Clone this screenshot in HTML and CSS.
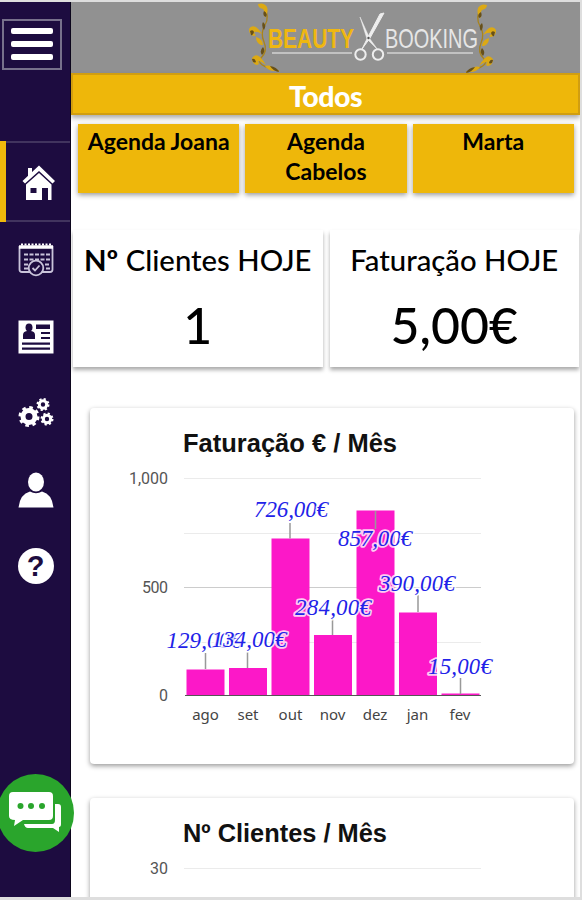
FILE: index.html
```html
<!DOCTYPE html>
<html lang="pt">
<head>
<meta charset="utf-8">
<title>Beauty Booking</title>
<link rel="stylesheet" href="styles.css">
</head>
<body>
<div class="app">
  <aside class="sidebar">
    <button class="menu" aria-label="Menu"><span></span><span></span><span></span></button>
    <nav class="nav">
      <a class="item active">
        <svg width="34" height="36" viewBox="0 0 34 36" fill="#fff">
          <path d="M6 3h4v6l-4 4z"/>
          <path d="M17 .5 33 16l-2.500 2.500L17 6 3 18.500.500 16z"/>
          <path d="M17 8 29.500 19.500V35H26V23h-6v12H4V19.500zM8.500 23v5h6v-5z" fill-rule="evenodd"/>
        </svg>
      </a>
      <a class="item">
        <svg width="36" height="34" viewBox="0 0 36 34" fill="none" stroke="#c9c4da">
          <path d="M12 29H4q-2.500 0-2.500-2.500V4h33v22.500Q34.500 29 32 29h-8" stroke-width="1.800"/>
          <path d="M1 4h34" stroke="#fff" stroke-width="3.500"/>
          <path d="M3 1.500h31" stroke="#fff" stroke-width="2" stroke-dasharray="2 1.500"/>
          <path d="M6 11.500h26M6 16.500h26M6 21.500h5M27 21.500h5M6 25.500h4M28 25.500h4" stroke-width="1.800" stroke-dasharray="4 1.500"/>
          <circle cx="18" cy="25" r="7.300" fill="#1d0c40" stroke-width="1.800"/>
          <path d="m14.500 25 2.500 2.500 4.500-5" stroke-width="1.800"/>
        </svg>
      </a>
      <a class="item">
        <svg width="36" height="34" viewBox="0 0 36 34">
          <path d="M.5.500h35v33H.5z" fill="#fff"/>
          <g fill="#1d0c40"><ellipse cx="11" cy="7.500" rx="3.500" ry="4"/><path d="M5 19v-4q0-3.500 4-4h4q4 .500 4 4v4zM18 4.500h14V9H18zM23 12h9v2h-9zM23 17h9v2h-9zM4 22.500h28v2.200H4zM4 27.500h28v2.200H4z"/></g>
        </svg>
      </a>
      <a class="item">
        <svg width="36" height="30" viewBox="0 0 36 30" fill="none" stroke="#fff">
          <circle cx="11" cy="18.500" r="6" stroke-width="5"/><circle cx="11" cy="18.500" r="9" stroke-width="3" stroke-dasharray="3.530 3.530"/>
          <circle cx="25" cy="6.500" r="3.700" stroke-width="3"/><circle cx="25" cy="6.500" r="5.500" stroke-width="2" stroke-dasharray="2.160 2.160"/>
          <circle cx="29" cy="21" r="3.700" stroke-width="3"/><circle cx="29" cy="21" r="5.500" stroke-width="2" stroke-dasharray="2.160 2.160"/>
        </svg>
      </a>
      <a class="item">
        <svg width="36" height="36" viewBox="0 0 36 36" fill="#fff">
          <ellipse cx="18" cy="10" rx="8" ry="9.500"/><path d="M.5 35.500Q2 22 12 19.500q6 3.500 12 0Q34 22 35.500 35.500z"/>
        </svg>
      </a>
      <a class="item"><span class="help">?</span></a>
    </nav>
  </aside>

  <main class="content">
    <header class="brand">
      <svg width="340" height="71" viewBox="240 2 340 71" role="img" aria-label="Beauty Booking">
        <defs>
          <g id="flourish">
            <path d="M264 8q6 8 1 17-5 8-1 17t-3 16 18 13" fill="none" stroke="#a9831b" stroke-width="1.300"/>
            <g fill="#dca914">
              <path d="M258 4q6-2 9 3 2 6-3 10 1-6-1-8-5-1-5-5zM249 29q2-4 7-2 4 3 6 7-7-4-8-1 3 3 0 3-5-1-5-7zM252 58q4-5 8-1 4 4 6 8-5-4-8-4 2 4-1 4-5-1-5-7zM261 45q-5-2-5-8 7 2 7 8zM265 66q6-2 10 5-7 0-10-5z"/>
            </g>
            <g fill="#67501a">
              <path d="M264 11q4 2 2 6-4-1-2-6zM250 31q3-2 4 1-1 4-3 3zM263 22q4 3 1 8-3-4-1-8zM252 59q3-1 4 3-3 2-4-3zM263 47q3 4-1 8-3-4 1-8zM270 66q7 1 9 6-6-1-9-6z"/>
            </g>
          </g>
        </defs>
        <use href="#flourish"/>
        <use href="#flourish" transform="matrix(-1 0 0 1 745 1)"/>
        <text class="beauty" x="268" y="48" textLength="86" lengthAdjust="spacingAndGlyphs">BEAUTY</text>
        <text class="booking" x="385" y="48" textLength="93" lengthAdjust="spacingAndGlyphs">BOOKING</text>
        <path d="M272 53h80M387 53h86" stroke="#d2d2d2" stroke-width="1.500"/>
        <g fill="none" stroke="#eee">
          <path d="m360 17 10 22 8 11-11-11z" fill="#eee" stroke-width=".5"/>
          <path d="m384 13-14 25-8 11 7-14 11-21z" fill="#eee" stroke-width="1"/>
          <circle cx="360.500" cy="54.500" r="5.200" stroke-width="2"/><circle cx="378" cy="54.500" r="5.200" stroke-width="2"/>
        </g>
        <circle cx="368.500" cy="38" r="1.200" fill="#555"/>
      </svg>
    </header>
    <div class="all">Todos</div>
    <div class="agendas">
      <button>Agenda Joana</button>
      <button>Agenda Cabelos</button>
      <button>Marta</button>
    </div>
    <section class="stats">
      <article><h2><b>Nº</b> Clientes HOJE</h2><p>1</p></article>
      <article><h2>Faturação HOJE</h2><p>5,00€</p></article>
    </section>
    <section class="charts">
      <article class="chart">
        <svg width="484" height="356" viewBox="90 408 484 356">
          <text class="title" x="183" y="452" textLength="214" lengthAdjust="spacingAndGlyphs">Faturação € / Mês</text>
          <path class="minor" d="M184 478.500h297M184 533.500h297M184 642.500h297"/>
          <path class="major" d="M184 587.500h297"/>
          <g class="ticks"><text x="168" y="484" textLength="39">1,000</text><text x="168" y="593" textLength="26">500</text><text x="168" y="701">0</text></g>
          <path class="bars" d="M186.500 669.500h38V695h-38zM229 668h38v27h-38zM271.500 538.500h38V695h-38zM314 635h38v60h-38zM356.500 510.500h38V695h-38zM399 612.500h38V695h-38zM441.500 693.500h38v1.500h-38z"/>
          <path class="axis" d="M185 695.500h296"/>
          <path class="stems" d="M205.500 653v16M247.500 652v16M290 523v15.500M332.500 619v16M375.500 511v18M418 595v17M460.500 678v16"/>
          <g class="values">
            <text x="204" y="648" textLength="75">129,00€</text>
            <text x="249" y="647" textLength="75">134,00€</text>
            <text x="291" y="517" textLength="74">726,00€</text>
            <text x="333" y="615" textLength="76">284,00€</text>
            <text x="375" y="546" textLength="74">857,00€</text>
            <text x="417" y="591" textLength="76">390,00€</text>
            <text x="460" y="674" textLength="64">15,00€</text>
          </g>
          <g class="months">
            <text x="205.500" y="720">ago</text><text x="248" y="720">set</text><text x="290.500" y="720">out</text><text x="332.500" y="720">nov</text><text x="375" y="720">dez</text><text x="417.500" y="720">jan</text><text x="460" y="720">fev</text>
          </g>
        </svg>
      </article>
      <article class="chart">
        <svg width="484" height="356" viewBox="90 798 484 356">
          <text class="title" x="183" y="842" textLength="204" lengthAdjust="spacingAndGlyphs">Nº Clientes / Mês</text>
          <path class="minor" d="M184 868.500h297"/>
          <g class="ticks"><text x="168" y="874" textLength="18">30</text></g>
        </svg>
      </article>
    </section>
  </main>
  <button class="chat" aria-label="Chat">
    <svg width="54" height="44" viewBox="0 0 54 44">
      <path d="M46 13h3q3 0 3 3v17q0 3-2 3v5l-6-4H19q-3 0-4-4h28q3 0 3-4z" fill="#fff"/>
      <path d="M4 1h36q4 0 4 4v20q0 4-4 4H14l-9 6 1-6q-6 0-6-4V5q0-4 4-4z" fill="#fff"/>
      <g fill="#2aa52c"><circle cx="11.500" cy="15" r="3"/><circle cx="22" cy="15" r="3"/><circle cx="33" cy="15" r="3"/></g>
    </svg>
  </button>
</div>
</body>
</html>
```

FILE: styles.css
```css
* { box-sizing: border-box; }
body { margin: 0; background: #fff; font-family: Lato, sans-serif; color: #000; }
button { border: 0; padding: 0; font: inherit; color: inherit; }
.app {
  position: relative; display: flex; width: 582px; height: 900px; overflow: hidden;
  border: solid #dedede; border-width: 2px 2px 3px 0; background: #fff;
}
.sidebar { flex: 0 0 71px; background: #1d0c40; border-right: 1px solid #0c061c; }
.menu {
  display: flex; flex-direction: column; justify-content: space-between;
  width: 60px; height: 51px; margin: 17px 0 0 2px; padding: 7px 7px 8px;
  background: none; border: 2px solid #77708c;
}
.menu span { height: 6px; background: #fff; border-radius: 2px; }
.nav { display: flex; flex-direction: column; margin-top: 71px; }
.item { display: flex; align-items: center; justify-content: center; height: 76.5px; padding-left: 1px; }
.active {
  height: 81px; padding-top: 3px;
  border-left: 6px solid #f0b90b;
  box-shadow: inset 0 2px #41345e, inset 0 -2px #41345e;
}
.help {
  width: 36px; height: 36px; border-radius: 50%; background: #fff; color: #1d0c40;
  font: bold 29px/36px "Liberation Sans", sans-serif; text-align: center;
}
.content { flex: 1; min-width: 0; overflow: hidden; }
.brand { height: 71px; background: #919191; padding-left: 169px; }
.brand svg { display: block; }
.beauty { font: bold 28px "Liberation Sans", sans-serif; fill: #efb711; }
.booking { font: 28px "Liberation Sans", sans-serif; fill: #e6e6e6; }
.all {
  height: 42px; background: #eeb70a; border: 2px solid #d19e10; color: #fff;
  font: 900 28.5px/43px Lato, sans-serif; text-align: center; letter-spacing: -.5px;
  box-shadow: 0 3px 5px #0005;
}
.agendas { display: flex; gap: 6px; padding: 9px 6px 0 7px; }
.agendas button {
  flex: 1; height: 69px; padding: 2px 8px 0; background: #eeb70a;
  display: flex; justify-content: center; text-align: center;
  font: bold 23px/30px Lato, sans-serif;
  box-shadow: 0 2px 5px #0006;
}
.stats { display: flex; gap: 7px; padding: 37px 1px 0 2px; }
.stats article { flex: 1; height: 137px; text-align: center; background: #fff; box-shadow: 0 3px 4px #0005; }
.stats h2 { margin: 12px 0 0; font-size: 29.3px; line-height: 36px; font-weight: 500; white-space: nowrap; }
.stats p { margin: 17px 0 0; font-size: 50px; line-height: 60px; font-weight: 500; }
.charts { display: flex; flex-direction: column; gap: 34px; padding: 41px 6px 0 19px; }
.chart { flex: 0 0 356px; border-radius: 4px; background: #fff; box-shadow: 0 2px 5px #0006; }
.chart svg { display: block; }
.title { font: bold 25px "Liberation Sans", sans-serif; fill: #111; }
.ticks { font: 16px Roboto, sans-serif; fill: #555; text-anchor: end; }
.months { font: 15px "Noto Sans", sans-serif; fill: #444; text-anchor: middle; }
.minor { stroke: #ebebeb; }
.major { stroke: #ccc; }
.axis { stroke: #555; }
.bars { fill: #fc18c8; }
.stems { stroke: #999; stroke-width: 1.5; }
.values {
  font: italic 23px "Liberation Serif", serif; fill: #2222e8; text-anchor: middle;
  stroke: #fffc; stroke-width: 3.5px; stroke-linejoin: round; paint-order: stroke;
}
.chat {
  position: absolute; left: -3px; top: 772px; width: 77px; height: 78px; border-radius: 50%;
  background: #2aa52c; display: flex; align-items: center; justify-content: center;
}
```
